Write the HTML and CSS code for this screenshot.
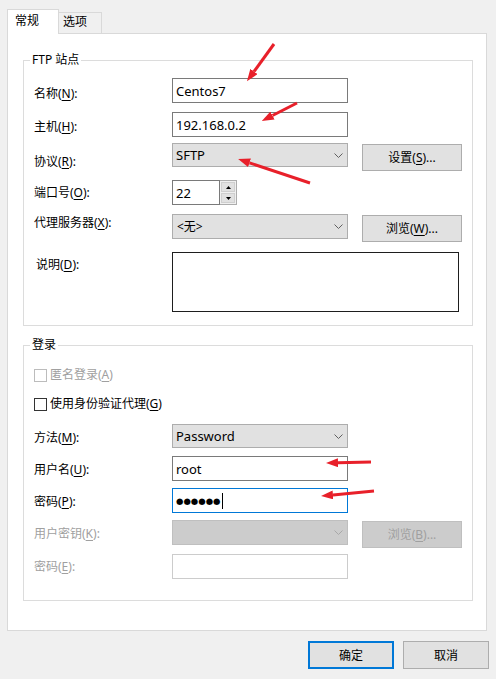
FILE: index.html
```html
<!DOCTYPE html>
<html lang="zh-CN">
<head>
    <meta charset="UTF-8">
    <title>站点属性</title>
    <link rel="stylesheet" href="styles.css">
</head>
<body>
    <div class="tabs">
        <div class="tab tab-active">常规</div>
        <div class="tab">选项</div>
    </div>

    <div class="panel">
        <!-- FTP 站点 -->
        <div class="group group-site">
            <div class="legend">FTP 站点</div>

            <div class="row mt-10">
                <div class="lbl at-8">名称(<u>N</u>):</div>
                <div class="edit">Centos7</div>
            </div>
            <div class="row mt-9">
                <div class="lbl at-7">主机(<u>H</u>):</div>
                <div class="edit">192.168.0.2</div>
            </div>
            <div class="row mt-6">
                <div class="lbl at-11">协议(<u>R</u>):</div>
                <div class="combo"><span>SFTP</span><svg class="chev" width="9" height="5" viewBox="0 0 9 5"><path d="M0.5 0.5L4.5 4.5L8.5 0.5"/></svg></div>
                <div class="btn">设置(<u>S</u>)...</div>
            </div>
            <div class="row mt-9">
                <div class="lbl at-5">端口号(<u>O</u>):</div>
                <div class="spin">
                    <div class="spin-edit">22</div>
                    <div class="spin-btns">
                        <div class="spin-btn"><svg width="5" height="3" viewBox="0 0 5 3"><path d="M0 3L2.5 0L5 3z"/></svg></div>
                        <div class="spin-btn"><svg width="5" height="3" viewBox="0 0 5 3"><path d="M0 0L2.5 3L5 0z"/></svg></div>
                    </div>
                </div>
            </div>
            <div class="row mt-9">
                <div class="lbl at-1">代理服务器(<u>X</u>):</div>
                <div class="combo combo-tall"><span class="pad1">&lt;无&gt;</span><svg class="chev" width="9" height="5" viewBox="0 0 9 5"><path d="M0.5 0.5L4.5 4.5L8.5 0.5"/></svg></div>
                <div class="btn">浏览(<u>W</u>)...</div>
            </div>
            <div class="row mt-10">
                <div class="lbl at-5 ind">说明(<u>D</u>):</div>
                <div class="memo"></div>
            </div>
        </div>

        <!-- 登录 -->
        <div class="group group-login">
            <div class="legend">登录</div>

            <div class="check-row off mt-14">
                <span class="box"></span><span>匿名登录(<u>A</u>)</span>
            </div>
            <div class="check-row mt-13">
                <span class="box"></span><span>使用身份验证代理(<u>G</u>)</span>
            </div>
            <div class="row mt-12">
                <div class="lbl at-6">方法(<u>M</u>):</div>
                <div class="combo"><span>Password</span><svg class="chev" width="9" height="5" viewBox="0 0 9 5"><path d="M0.5 0.5L4.5 4.5L8.5 0.5"/></svg></div>
            </div>
            <div class="row mt-8">
                <div class="lbl at-6">用户名(<u>U</u>):</div>
                <div class="edit">root</div>
            </div>
            <div class="row mt-7">
                <div class="lbl at-6">密码(<u>P</u>):</div>
                <div class="edit edit-focus"><span class="dots">●●●●●●</span><span class="caret"></span></div>
            </div>
            <div class="row mt-7 off">
                <div class="lbl at-6">用户密钥(<u>K</u>):</div>
                <div class="combo combo-tall combo-off"><span></span><svg class="chev" width="9" height="5" viewBox="0 0 9 5"><path d="M0.5 0.5L4.5 4.5L8.5 0.5"/></svg></div>
                <div class="btn btn-off">浏览(<u>B</u>)...</div>
            </div>
            <div class="row mt-6 off">
                <div class="lbl at-5">密码(<u>E</u>):</div>
                <div class="edit edit-off"></div>
            </div>
        </div>
    </div>

    <div class="footer">
        <div class="btn btn-default">确定</div>
        <div class="btn btn-foot">取消</div>
    </div>

    <!-- 标注箭头 -->
    <svg class="marks" width="496" height="679" viewBox="0 0 496 679">
        <defs>
            <marker id="head" markerWidth="4" markerHeight="3" refX="0" refY="1.5" orient="auto">
                <path d="M0 0L4 1.5L0 3z" fill="#e8202a"/>
            </marker>
        </defs>
        <g stroke="#e8202a" stroke-width="3" marker-end="url(#head)">
            <line x1="274" y1="44" x2="254" y2="71.5"/>
            <line x1="297" y1="103" x2="272.5" y2="115.5"/>
            <line x1="310" y1="183" x2="249.5" y2="162.8"/>
            <line x1="371" y1="462" x2="338" y2="462.7"/>
            <line x1="374" y1="491" x2="333" y2="494.9"/>
        </g>
    </svg>
</body>
</html>
```

FILE: styles.css
```css
body {
    margin: 0;
    width: 496px;
    height: 679px;
    position: relative;
    overflow: hidden;
    background: #f0f0f0;
    color: #000;
    font-family: "Noto Sans", "Noto Sans CJK SC", sans-serif;
    font-size: 12px;
    line-height: 16px;
}
u {
    text-decoration-thickness: 1px;
    text-underline-offset: 2px;
}

/* 选项卡 */
.tabs {
    display: flex;
    align-items: flex-end;
    height: 24px;
    padding: 9px 0 0 7px;
}
.tab {
    box-sizing: border-box;
    width: 43px;
    height: 21px;
    padding: 1px 0 0 4px;
    background: #f0f0f0;
    border: 1px solid #d9d9d9;
    border-left: none;
    border-bottom: none;
}
.tab-active {
    position: relative;
    z-index: 1;
    width: 52px;
    height: 25px;
    margin-bottom: -1px;
    padding: 3px 0 0 7px;
    background: #fff;
    border-left: 1px solid #d9d9d9;
}

.panel {
    box-sizing: border-box;
    width: 480px;
    margin-left: 7px;
    padding-bottom: 29px;
    background: #fff;
    border: 1px solid #d9d9d9;
}

/* 分组框 */
.group {
    margin: 0 13px 0 15px;
    padding: 0 10px 13px 10px;
    border: 1px solid #dcdcdc;
}
.group-site {
    margin-top: 26px;
}
.group-login {
    margin-top: 19px;
    padding-bottom: 21px;
}
.legend {
    width: fit-content;
    margin: -9px 0 0 -4px;
    padding: 0 2px;
    background: #fff;
}

.row {
    display: grid;
    grid-template-columns: 138px 176px 114px;
    align-items: start;
}
.row > .btn { margin-left: 14px; }
.mt-6 { margin-top: 6px; }
.mt-7 { margin-top: 7px; }
.mt-8 { margin-top: 8px; }
.mt-9 { margin-top: 9px; }
.mt-10 { margin-top: 10px; }
.mt-12 { margin-top: 12px; }
.mt-13 { margin-top: 13px; }
.mt-14 { margin-top: 14px; }

.lbl { white-space: nowrap; }
.at-1 { padding-top: 1px; }
.at-5 { padding-top: 5px; }
.at-6 { padding-top: 6px; }
.at-7 { padding-top: 7px; }
.at-8 { padding-top: 8px; }
.at-11 { padding-top: 11px; }
.ind { padding-left: 2px; }

/* 输入控件 */
.edit {
    box-sizing: border-box;
    height: 25px;
    padding: 4px 3px 0;
    background: #fff;
    border: 1px solid #7a7a7a;
    font-size: 13px;
}
.edit-focus {
    display: flex;
    align-items: center;
    padding-top: 0;
    border-color: #0078d7;
}
.edit-off {
    border-color: #cccccc;
}
.dots {
    font-family: "DejaVu Sans", sans-serif;
    font-size: 8.5px;
    line-height: 10px;
}
.caret {
    width: 1px;
    height: 16px;
    margin-left: 1px;
    background: #000;
}

.combo {
    box-sizing: border-box;
    display: flex;
    align-items: center;
    justify-content: space-between;
    height: 24px;
    padding: 0 4px 0 3px;
    background: #e1e1e1;
    border: 1px solid #adadad;
    font-size: 13px;
}
.combo-tall { height: 25px; }
.combo .pad1 { padding-left: 1px; font-size: 12px; }
.combo-off {
    background: #cccccc;
    border-color: #bfbfbf;
}
.chev path {
    fill: none;
    stroke: #606060;
}
.combo-off .chev path { stroke: #a8a8a8; }

.btn {
    box-sizing: border-box;
    height: 27px;
    margin-top: 1px;
    padding-top: 5px;
    text-align: center;
    background: #e1e1e1;
    border: 1px solid #adadad;
}
.btn-off {
    background: #cccccc;
    border-color: #bfbfbf;
}

.spin {
    display: flex;
    width: 65px;
    height: 25px;
}
.spin-edit {
    box-sizing: border-box;
    width: 48px;
    padding: 4px 3px 0;
    border: 1px solid #7a7a7a;
    font-size: 13px;
}
.spin-btns {
    box-sizing: border-box;
    display: flex;
    flex-direction: column;
    gap: 1px;
    width: 17px;
    padding: 1px;
    background: #f0f0f0;
    border: 1px solid #adadad;
    border-left: none;
}
.spin-btn {
    flex: 1;
    display: flex;
    align-items: center;
    justify-content: center;
    background: #e1e1e1;
    border: 1px solid #cfcfcf;
}

.memo {
    grid-column: 2 / 4;
    box-sizing: border-box;
    width: 287px;
    height: 60px;
    border: 1px solid #1e1e1e;
}

/* 复选框 */
.check-row {
    display: flex;
    align-items: center;
    gap: 3px;
    height: 16px;
}
.box {
    box-sizing: border-box;
    width: 13px;
    height: 13px;
    background: #fff;
    border: 1px solid #333;
}
.off { color: #a0a0a0; }
.off .box { border-color: #bcbcbc; }

/* 底部按钮 */
.footer {
    display: flex;
    justify-content: flex-end;
    gap: 9px;
    margin-top: 10px;
    padding-right: 7px;
}
.btn-default,
.btn-foot {
    width: 86px;
    height: 28px;
    margin-top: 0;
}
.btn-default {
    padding-top: 5px;
    border: 2px solid #0078d7;
}
.btn-foot { padding-top: 6px; }

.marks {
    position: absolute;
    top: 0;
    left: 0;
    pointer-events: none;
}
```
